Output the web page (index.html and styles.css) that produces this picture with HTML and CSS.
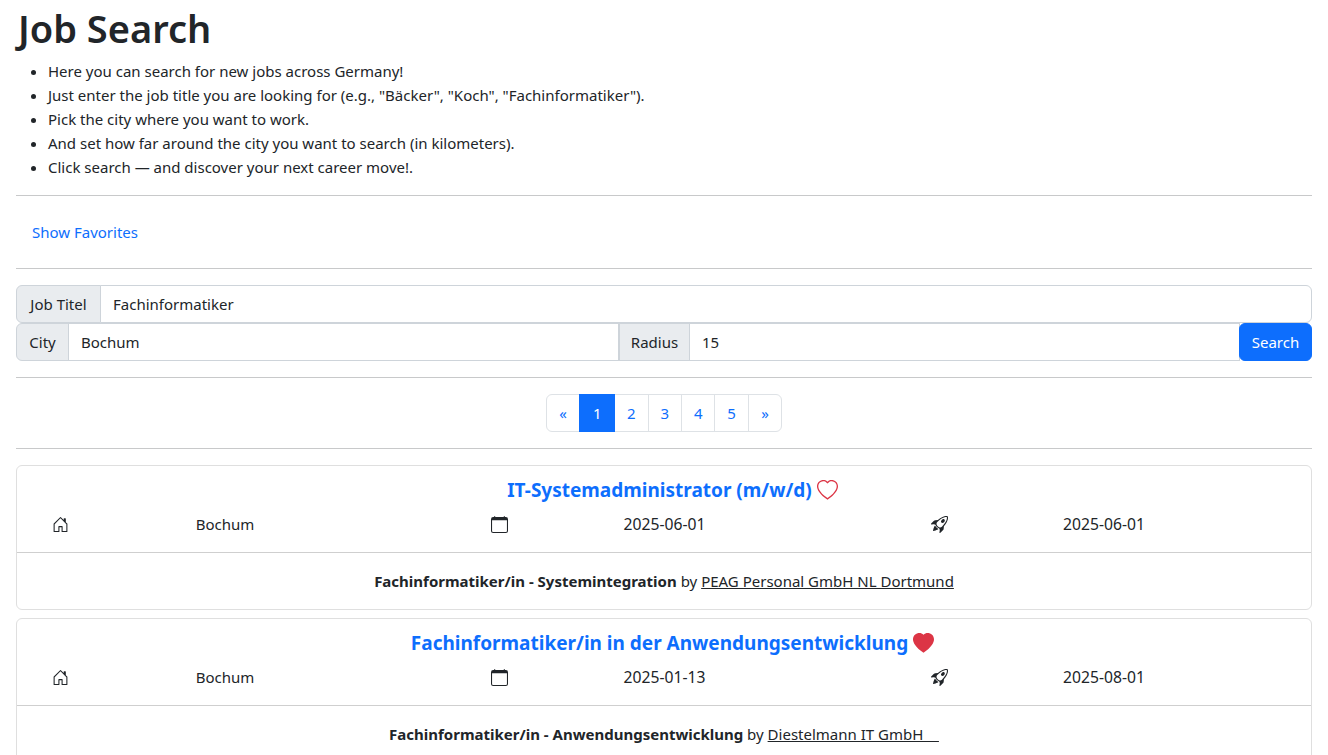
FILE: index.html
```html
<!DOCTYPE html>
<html lang="en">
<head>
<meta charset="utf-8">
<title>Job Search</title>
<link rel="stylesheet" href="styles.css">
</head>
<body>
<svg class="defs" width="0" height="0" aria-hidden="true">
  <symbol id="house" viewBox="0 0 16 16"><path d="M8.354 1.146a.5.5 0 0 0-.708 0l-6 6A.5.5 0 0 0 1.5 7.5v7a.5.5 0 0 0 .5.5h4.5a.5.5 0 0 0 .5-.5v-4h2v4a.5.5 0 0 0 .5.5H14a.5.5 0 0 0 .5-.5v-7a.5.5 0 0 0-.146-.354L13 5.793V2.5a.5.5 0 0 0-.5-.5h-1a.5.5 0 0 0-.5.5v1.293zM2.5 14V7.707l5.5-5.5 5.5 5.5V14H10v-4a.5.5 0 0 0-.5-.5h-3a.5.5 0 0 0-.5.5v4z"/></symbol>
  <symbol id="calendar" viewBox="0 0 16 16"><path d="M3.5 0a.5.5 0 0 1 .5.5V1h8V.5a.5.5 0 0 1 1 0V1h1a2 2 0 0 1 2 2v11a2 2 0 0 1-2 2H2a2 2 0 0 1-2-2V3a2 2 0 0 1 2-2h1V.5a.5.5 0 0 1 .5-.5M1 4v10a1 1 0 0 0 1 1h12a1 1 0 0 0 1-1V4z"/></symbol>
  <symbol id="rocket" viewBox="0 0 16 16"><path d="M9.752 6.193c.599.6 1.73.437 2.528-.362s.96-1.932.362-2.531c-.599-.6-1.73-.438-2.528.361-.798.8-.96 1.933-.362 2.532"/><path d="M15.811 3.312c-.363 1.534-1.334 3.626-3.64 6.218l-.24 2.408a2.56 2.56 0 0 1-.732 1.526L8.817 15.85a.51.51 0 0 1-.867-.434l.27-1.899c.04-.28-.013-.593-.131-.956a9 9 0 0 0-.249-.657l-.082-.202c-.815-.197-1.578-.662-2.191-1.277-.614-.615-1.079-1.379-1.275-2.195l-.203-.083a10 10 0 0 0-.655-.248c-.363-.119-.675-.172-.955-.132l-1.896.27A.51.51 0 0 1 .15 7.17l2.382-2.386c.41-.41.947-.67 1.524-.734h.006l2.4-.238C9.005 1.55 11.087.582 12.623.208c.89-.217 1.59-.232 2.08-.188.244.023.435.06.57.093q.1.026.16.045c.184.06.279.13.351.295l.029.073a3.5 3.5 0 0 1 .157.721c.055.485.051 1.178-.159 2.065m-4.828 7.475.04-.04-.107 1.081a1.54 1.54 0 0 1-.44.913l-1.298 1.3.054-.38c.072-.506-.034-.993-.172-1.418a9 9 0 0 0-.164-.45c.738-.065 1.462-.38 2.087-1.006M5.205 5c-.625.626-.94 1.351-1.004 2.09a9 9 0 0 0-.45-.164c-.424-.138-.91-.244-1.416-.172l-.38.054 1.3-1.3c.245-.246.566-.401.91-.44l1.08-.107zm9.406-3.961c-.38-.034-.967-.027-1.746.163-1.558.38-3.917 1.496-6.937 4.521-.62.62-.799 1.34-.687 2.051.107.676.483 1.362 1.048 1.928.564.565 1.25.941 1.924 1.049.71.112 1.429-.067 2.048-.688 3.079-3.083 4.192-5.444 4.556-6.987.183-.771.18-1.345.138-1.713a3 3 0 0 0-.045-.283 3 3 0 0 0-.3-.041Z"/><path d="M7.009 12.139a7.6 7.6 0 0 1-1.804-1.352A7.6 7.6 0 0 1 3.794 8.86c-1.102.992-1.965 5.054-1.839 5.18.125.126 3.936-.896 5.054-1.902Z"/></symbol>
  <symbol id="heart" viewBox="0 0 16 16"><path d="m8 2.748-.717-.737C5.6.281 2.514.878 1.4 3.053c-.523 1.023-.641 2.5.314 4.385.92 1.815 2.834 3.989 6.286 6.357 3.452-2.368 5.365-4.542 6.286-6.357.955-1.886.838-3.362.314-4.385C13.486.878 10.4.28 8.717 2.01zM8 15C-7.333 4.868 3.279-3.04 7.824 1.143q.09.083.176.171a3 3 0 0 1 .176-.17C12.72-3.042 23.333 4.867 8 15"/></symbol>
  <symbol id="heart-fill" viewBox="0 0 16 16"><path d="M8 1.314C12.438-3.248 23.534 4.735 8 15-7.534 4.736 3.562-3.248 8 1.314"/></symbol>
</svg>
<main class="page">
  <h1 class="title">Job Search</h1>
  <ul class="intro">
    <li>Here you can search for new jobs across Germany!</li>
    <li>Just enter the job title you are looking for (e.g., "Bäcker", "Koch", "Fachinformatiker").</li>
    <li>Pick the city where you want to work.</li>
    <li>And set how far around the city you want to search (in kilometers).</li>
    <li>Click search — and discover your next career move!.</li>
  </ul>
  <hr class="rule">
  <a class="fav-link" href="#">Show Favorites</a>
  <hr class="rule">
  <form class="search">
    <div class="group">
      <span class="addon addon-first addon-job">Job Titel</span>
      <input class="field field-last" value="Fachinformatiker">
    </div>
    <div class="group">
      <span class="addon addon-first addon-city">City</span>
      <input class="field" value="Bochum">
      <span class="addon addon-radius">Radius</span>
      <input class="field" value="15">
      <button class="search-btn" type="button">Search</button>
    </div>
  </form>
  <hr class="rule">
  <nav class="pager">
    <a class="pg pg-start pg-arrow" href="#">«</a>
    <a class="pg pg-active" href="#">1</a>
    <a class="pg" href="#">2</a>
    <a class="pg" href="#">3</a>
    <a class="pg" href="#">4</a>
    <a class="pg" href="#">5</a>
    <a class="pg pg-end pg-arrow" href="#">»</a>
  </nav>
  <hr class="rule">
  <article class="card">
    <header class="card-head">
      <div class="job-title"><a href="#">IT-Systemadministrator (m/w/d)</a> <svg class="heart"><use href="#heart"/></svg></div>
      <div class="meta">
        <div class="meta-item"><svg class="ico"><use href="#house"/></svg><span>Bochum</span></div>
        <div class="meta-item"><svg class="ico"><use href="#calendar"/></svg><span class="date">2025-06-01</span></div>
        <div class="meta-item"><svg class="ico"><use href="#rocket"/></svg><span class="date">2025-06-01</span></div>
      </div>
    </header>
    <div class="card-body"><strong>Fachinformatiker/in - Systemintegration</strong> by <a href="#">PEAG Personal GmbH NL Dortmund</a></div>
  </article>
  <article class="card">
    <header class="card-head">
      <div class="job-title"><a href="#">Fachinformatiker/in in der Anwendungsentwicklung</a> <svg class="heart"><use href="#heart-fill"/></svg></div>
      <div class="meta">
        <div class="meta-item"><svg class="ico"><use href="#house"/></svg><span>Bochum</span></div>
        <div class="meta-item"><svg class="ico"><use href="#calendar"/></svg><span class="date">2025-01-13</span></div>
        <div class="meta-item"><svg class="ico"><use href="#rocket"/></svg><span class="date">2025-08-01</span></div>
      </div>
    </header>
    <div class="card-body"><strong>Fachinformatiker/in - Anwendungsentwicklung</strong> by <a href="#">Diestelmann IT GmbH&nbsp;&nbsp;&nbsp;&nbsp;</a></div>
  </article>
</main>
</body>
</html>
```

FILE: styles.css
```css
* { box-sizing: border-box; }
html, body { margin: 0; padding: 0; height: 755px; overflow: hidden; }
body {
  font-family: "Noto Sans", "Open Sans", sans-serif;
  font-size: 15px;
  line-height: 24px;
  color: #212529;
  background: #fff;
}
.defs { position: absolute; }
.page { padding: 4px 16px 0; }
.title { margin: 0 0 7px; padding-left: 2px; font-size: 38px; line-height: 48px; font-weight: 600; }
.intro { margin: 0 0 16px; padding-left: 32px; }
.rule { margin: 0 0 16px; border: 0; border-top: 1px solid #c8c9ca; }
.fav-link { display: block; margin-bottom: 16px; height: 40px; padding: 8px 16px; color: #0d6efd; text-decoration: none; }
.search { margin: 0 0 16px; }
.group { display: flex; height: 38px; }
.addon { padding: 6px 0; text-align: center; background: #e9ecef; border: 1px solid #ced4da; white-space: nowrap; }
.addon-job { width: 85px; }
.addon-city { width: 53px; }
.addon-radius { width: 71px; }
.addon-first { border-radius: 6px 0 0 6px; }
.field { flex: 1 1 0; min-width: 0; padding: 6px 12px; margin-left: -1px; border: 1px solid #ced4da; font: inherit; color: #212529; background: #fff; }
.field-last { border-radius: 0 6px 6px 0; }
.search-btn { width: 73px; padding: 6px 0; margin-left: -1px; border: 1px solid #0d6efd; background: #0d6efd; color: #fff; font: inherit; border-radius: 6px; }
.pager { display: flex; justify-content: center; margin-bottom: 16px; height: 38px; }
.pg { width: 34.4px; margin-left: -1px; line-height: 36px; text-align: center; border: 1px solid #dee2e6; color: #0d6efd; text-decoration: none; }
.pg-start { border-radius: 6px 0 0 6px; margin-left: 0; }
.pg-end { border-radius: 0 6px 6px 0; }
.pg-active { width: 36px; background: #0d6efd; border-color: #0d6efd; color: #fff; position: relative; }
.card { border: 1px solid #dfdfdf; border-radius: 6px; margin-bottom: 8px; }
.card-head { padding: 8px 0 10px; border-bottom: 1px solid #cfcfcf; }
.job-title { display: flex; justify-content: center; align-items: center; gap: 5px; height: 32px; padding-left: 17px; font-size: 19px; font-weight: 700; color: #0d6efd; }
.job-title a { color: inherit; text-decoration: none; }
.heart { width: 21px; height: 21px; fill: #dc3545; }
.meta { display: grid; grid-template-columns: repeat(3, 330px); column-gap: 109.5px; height: 36px; align-items: center; }
.meta-item { display: grid; grid-template-columns: 86px 244px; align-items: center; }
.meta-item span { text-align: center; }
.meta-item .date { font-size: 15.7px; }
.ico { width: 17px; height: 17px; justify-self: center; fill: #212529; }
.card-body { height: 56px; padding: 16px; text-align: center; }
.card-body strong { font-weight: 700; }
.card-body a { color: #212529; }
```
